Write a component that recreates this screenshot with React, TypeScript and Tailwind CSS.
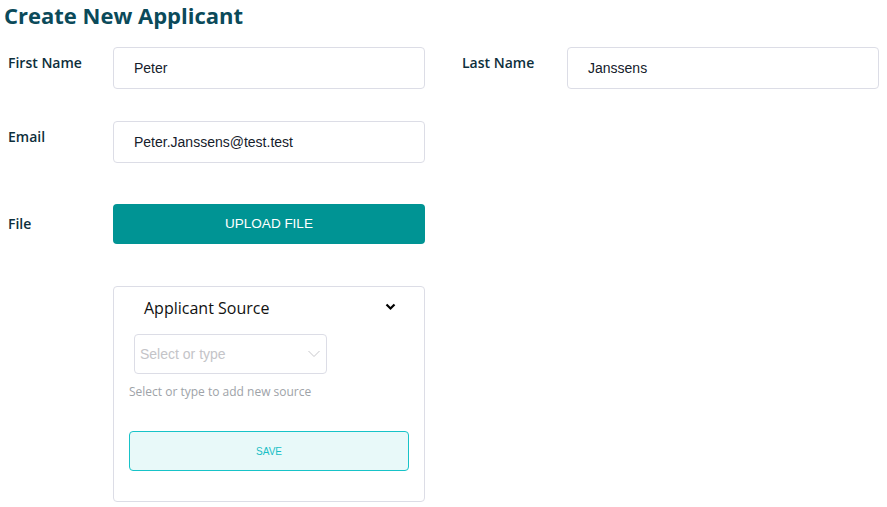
import React from "react";

const sans = "font-['Open_Sans',sans-serif]";
const arial = "font-['Liberation_Sans',Arial,sans-serif]";

function Field({ label, value, labelW = "w-[105px]" }: { label: string; value: string; labelW?: string }) {
  return (
    <div className="flex items-start">
      <div className={`${labelW} pt-[6px] text-[14px] leading-[20px] font-semibold text-[#0e2f3c] ${sans}`}>{label}</div>
      <div className={`w-[312px] h-[42px] border border-[#dcdde6] rounded-[4px] bg-white flex items-center pl-[20px] text-[14px] text-[#15202b] ${arial}`}>
        {value}
      </div>
    </div>
  );
}

export default function App() {
  return (
    <div className="w-[887px] h-[507px] bg-white overflow-hidden">
      <h1 className={`pl-[4px] text-[22px] leading-[30px] font-bold text-[#0b4a5a] ${sans}`}>Create New Applicant</h1>
      <div className="pl-[8px] mt-[17px] flex flex-col">
        <div className="flex gap-[37px]">
          <Field label="First Name" value="Peter" />
          <Field label="Last Name" value="Janssens" />
        </div>
        <div className="mt-[32px] flex">
          <Field label="Email" value="Peter.Janssens@test.test" />
        </div>
        <div className="mt-[41px] flex items-center">
          <div className={`w-[105px] text-[14px] leading-[20px] font-semibold text-[#0e2f3c] ${sans}`}>File</div>
          <button className={`w-[312px] h-[40px] rounded-[4px] bg-[#009494] text-white text-[13.5px] ${arial}`}>UPLOAD FILE</button>
        </div>
        <div className="mt-[42px] flex">
          <div className="w-[105px]" />
          <div className="w-[312px] h-[216px] border border-[#dcdde6] rounded-[4px] px-[15px] pt-[9px]">
            <div className="flex items-center justify-between pl-[15px] pr-[13px] h-[24px]">
              <span className={`text-[16px] text-[#111] ${sans}`}>Applicant Source</span>
              <svg width="11" height="8" viewBox="0 0 11 8" className="mt-[-2px]">
                <path d="M1.5 1.5 L5.5 5.5 L9.5 1.5" fill="none" stroke="#000" strokeWidth="2.2" />
              </svg>
            </div>
            <div className="mt-[14px] ml-[5px] w-[193px] h-[40px] border border-[#dcdde6] rounded-[4px] flex items-center justify-between pl-[5px] pr-[5px]">
              <span className={`text-[14px] text-[#c4c4c8] ${arial}`}>Select or type</span>
              <svg width="14" height="8" viewBox="0 0 14 8">
                <path d="M1.5 1 L7 6.5 L12.5 1" fill="none" stroke="#c8c8cc" strokeWidth="1" />
              </svg>
            </div>
            <div className={`mt-[9px] text-[12px] leading-[18px] text-[#9ea3a8] ${sans}`}>Select or type to add new source</div>
            <button className={`mt-[30px] w-full h-[40px] rounded-[4px] border border-[#17c3c8] bg-[#e8f9f9] text-[#17bfc6] text-[10px] ${arial}`}>SAVE</button>
          </div>
        </div>
      </div>
    </div>
  );
}
